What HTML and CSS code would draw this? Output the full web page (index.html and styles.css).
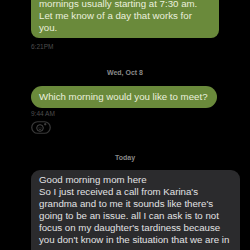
FILE: index.html
```html
<!DOCTYPE html>
<html lang="en">
<head>
    <meta charset="UTF-8">
    <meta name="viewport" content="width=device-width, initial-scale=1.0">
    <title>Messages</title>
    <link rel="stylesheet" href="styles.css">
</head>
<body>

<div class="thread">
    <div class="bubble out first">
        mornings usually starting at 7:30 am.<br>
        Let me know of a day that works for<br>
        you.
    </div>
    <div class="time">6:21PM</div>

    <div class="day">Wed, Oct 8</div>

    <div class="bubble out pill">Which morning would you like to meet?</div>
    <div class="time tight">9:44 AM</div>
    <div class="react">
        <svg width="20" height="13" viewBox="0 0 20 13">
            <rect x="0.75" y="0.75" width="18.5" height="11.5" rx="5.75" fill="none" stroke="#3a3a3a" stroke-width="1.2"/>
            <circle cx="9" cy="7" r="3.3" fill="none" stroke="#4a4a4a" stroke-width="1"/>
            <circle cx="8" cy="6.3" r="0.45" fill="#4a4a4a"/>
            <circle cx="10" cy="6.3" r="0.45" fill="#4a4a4a"/>
            <path d="M7.6 7.9 Q9 9.2 10.4 7.9" fill="none" stroke="#4a4a4a" stroke-width="0.8"/>
            <path d="M13 3.2 H15.4 M14.2 2 V4.4" stroke="#4a4a4a" stroke-width="0.9"/>
        </svg>
    </div>

    <div class="day today">Today</div>

    <div class="bubble in">
        Good morning mom here<br>
        So I just received a call from Karina's<br>
        grandma and to me it sounds like there's<br>
        going to be an issue. all I can ask is to not<br>
        focus on my daughter's tardiness because<br>
        you don't know in the situation that we are in
    </div>
</div>

</body>
</html>
```

FILE: styles.css
```css
html, body {
    margin: 0;
    background: #000;
    height: 100%;
    overflow: hidden;
}
body {
    font-family: "Liberation Sans", Arial, sans-serif;
}
.thread {
    display: flex;
    flex-direction: column;
    align-items: flex-start;
    padding-left: 31px;
}
.bubble {
    font-size: 9.7px;
    line-height: 12px;
    white-space: nowrap;
    padding: 5px 8px;
    box-sizing: border-box;
}
.out {
    background: #6a8a3b;
    color: #eaf0de;
}
.first {
    width: 188px;
    margin-top: -2px;
    padding-top: 0;
    padding-bottom: 4px;
    border-radius: 0 0 8px 8px;
}
.pill {
    padding-left: 8px;
    padding-right: 9px;
    border-radius: 11px;
}
.in {
    background: #2b2b2d;
    color: #e2e2e4;
    width: 209px;
    padding-top: 4px;
    padding-bottom: 20px;
    border-radius: 9px;
}
.time {
    font-size: 6.5px;
    line-height: 9px;
    color: #4e4e4e;
    margin-top: 3.5px;
}
.time.tight {
    margin-top: 1px;
}
.day {
    align-self: center;
    margin-left: -31px;
    font-size: 7px;
    font-weight: bold;
    line-height: 9px;
    color: #8a8a8a;
    margin-top: 17px;
    margin-bottom: 9px;
}
.today {
    margin-top: 19px;
    margin-bottom: 8.5px;
}
.react {
    margin-top: 3px;
    height: 13px;
}
.react svg {
    display: block;
}
```
